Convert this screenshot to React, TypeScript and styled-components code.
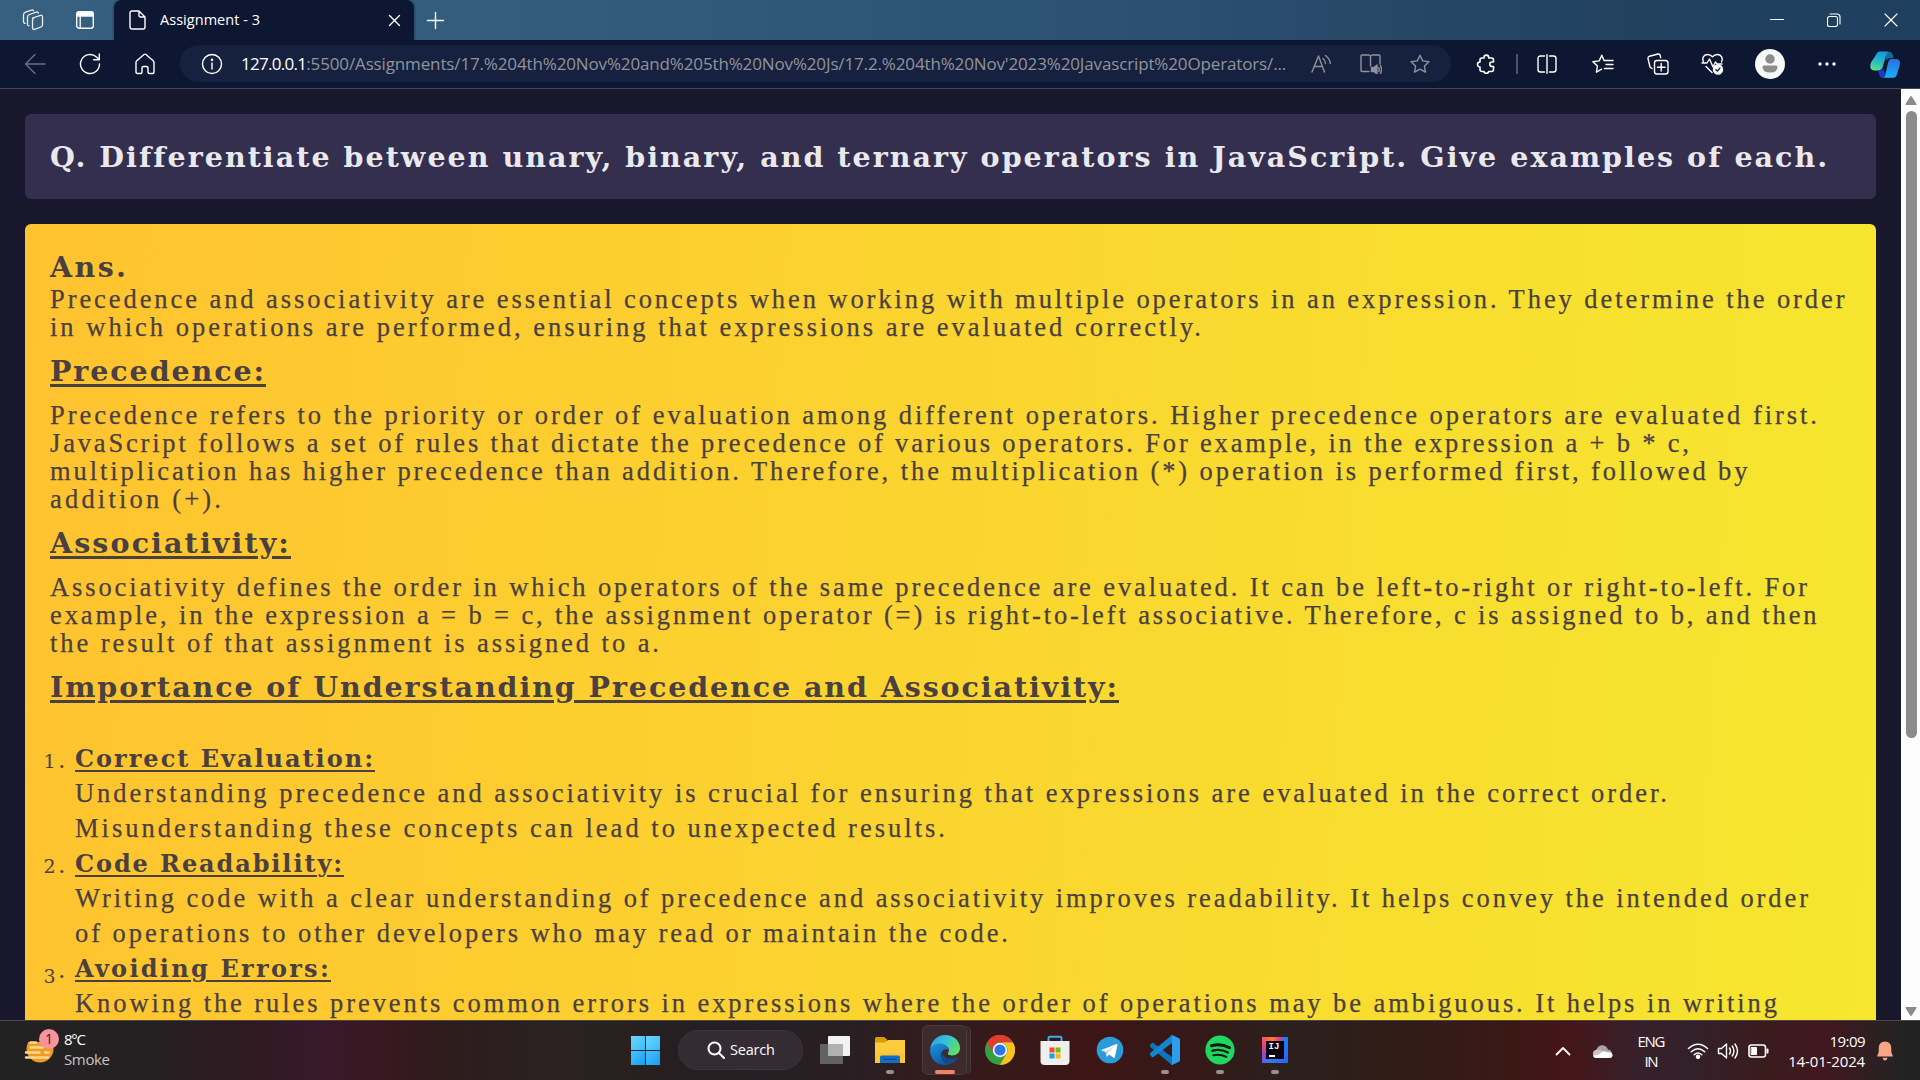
import React from 'react';
import styled, { createGlobalStyle, css } from 'styled-components';

const SERIF = '"Liberation Serif", serif';
const SERIF_BOLD = '"DejaVu Serif", serif';
const SANS = '"Open Sans", "Noto Sans", sans-serif';

const GlobalStyle = createGlobalStyle`
  * { box-sizing: border-box; }
  html, body { margin: 0; padding: 0; overflow: hidden; background: #19172b; }
  svg { display: block; }
`;

/* ---------- text tracking ---------- */

let ctx: CanvasRenderingContext2D | null = null;
function tracking(text: string, font: string, width: number, trailing: boolean) {
  if (!ctx) ctx = document.createElement('canvas').getContext('2d');
  if (!ctx) return 0;
  ctx.font = font;
  const natural = ctx.measureText(text).width;
  return (width - natural) / (trailing ? text.length : text.length - 1);
}

const BodyLine = styled.span`
  display: block;
  font: 400 26.5px ${SERIF};
  line-height: inherit;
  -webkit-text-stroke: 0.25px currentColor;
`;
const HeadLine = styled.span<{ $size: number; $line?: number }>`
  font: 700 ${(p) => p.$size}px ${SERIF_BOLD};
  line-height: inherit;
  text-decoration: ${(p) => (p.$line ? 'underline' : 'none')};
  text-decoration-thickness: ${(p) => p.$line || 0}px;
  text-underline-offset: 3px;
`;
const UiText = styled.span<{ $size: number; $color?: string }>`
  font: 400 ${(p) => p.$size}px ${SANS};
  color: ${(p) => p.$color || '#fff'};
  line-height: 20px;
  white-space: pre;
`;

const Body = ({ w, children }: { w: number; children: string }) => (
  <BodyLine style={{ letterSpacing: tracking(children, `400 26.5px ${SERIF}`, w, false) }}>{children}</BodyLine>
);
const Head = ({ w, size, line, children }: { w: number; size: number; line?: number; children: string }) => (
  <HeadLine $size={size} $line={line}
    style={{ letterSpacing: tracking(children, `700 ${size}px ${SERIF_BOLD}`, w, !!line) }}>{children}</HeadLine>
);
const Ui = ({ w, size, color, children }: { w: number; size: number; color?: string; children: string }) => (
  <UiText $size={size} $color={color}
    style={{ letterSpacing: tracking(children, `400 ${size}px ${SANS}`, w, false) }}>{children}</UiText>
);

/* ---------- browser frame ---------- */

const Screen = styled.div`
  width: 1920px;
  height: 1080px;
  display: flex;
  flex-direction: column;
  overflow: hidden;
`;
const TitleBar = styled.header`
  height: 40px;
  flex: none;
  display: flex;
  align-items: center;
  background: linear-gradient(90deg, #375f7f 0%, #335b7b 30%, #2b5070 60%, #21415f 85%, #1f3f5f 100%);
`;
const Tab = styled.div`
  width: 300px;
  height: 40px;
  margin-left: 20px;
  padding: 0 13px 0 15px;
  display: flex;
  align-items: center;
  gap: 14px;
  background: #0e1731;
  border-radius: 8px 8px 0 0;
  box-shadow: 0 0 3px rgba(8, 20, 45, 0.6);
`;
const Grow = styled.div`
  flex: 1;
`;
const Gap = styled.div<{ $w: number }>`
  flex: none;
  width: ${(p) => p.$w}px;
`;
const ToolBar = styled.nav`
  height: 49px;
  flex: none;
  display: flex;
  align-items: center;
  background: #0e1731;
  border-bottom: 1px solid #3e495e;
`;
const Address = styled.div`
  width: 1271px;
  height: 37px;
  margin: 0 0 1px 25px;
  padding-left: 21px;
  border-radius: 19px;
  background: #16213f;
  display: flex;
  align-items: center;
`;
const Separator = styled.i`
  width: 2px;
  height: 20px;
  background: #48526a;
`;
const Avatar = styled.div`
  width: 30px;
  height: 30px;
  border-radius: 50%;
  background: #f8f8f8;
  display: grid;
  place-items: center;
`;

/* ---------- page ---------- */

const Viewport = styled.div`
  flex: 1;
  min-height: 0;
  display: flex;
  background: #19172b;
`;
const Page = styled.main`
  flex: 1;
  min-width: 0;
  height: 931px;
  overflow: hidden;
  padding: 25px 25px 0;
  white-space: nowrap;
`;
const Question = styled.h1`
  margin: 0 0 25px;
  height: 85px;
  padding: 26px 25px 0;
  border-radius: 6px;
  background: #342f4e;
  color: #e9e8ec;
  line-height: 34px;
  font-size: 28px;
`;
const Answer = styled.section`
  height: 900px;
  padding: 26px 25px 0;
  border-radius: 6px 6px 0 0;
  background: linear-gradient(94deg, #ffc32f 0%, #f6e72f 100%);
  color: #4a4041;
`;
const AnswerLabel = styled.div`
  height: 34px;
  line-height: 34px;
`;
const Para = styled.p`
  margin: 0;
  padding-top: 1px;
  line-height: 28px;
`;
const Heading = styled.h2`
  margin: 13px 0 12px;
  height: 34px;
  line-height: 34px;
  font-size: 28px;
`;
const List = styled.ol`
  list-style: none;
  margin: 37px 0 0;
  padding: 0;
  line-height: 35px;
`;
const Item = styled.li`
  display: grid;
  grid-template-columns: 25px 1fr;
`;
const ItemTitle = styled.div`
  height: 35px;
`;
const Marker = styled.div`
  height: 36px;
  padding-top: 1px;
  margin-left: -20px;
  padding-right: 10px;
  text-align: right;
  font: 400 26px ${SERIF};
  line-height: 35px;
`;
const Digit = styled.span<{ $low?: boolean }>`
  font: 400 19px "DejaVu Serif", serif;
  line-height: 1;
  margin-right: 3px;
  ${(p) => p.$low && css`vertical-align: -5px;`}
`;
const Scroll = styled.aside`
  width: 19px;
  padding: 7px 0 4px 1px;
  background: #fcfcfc;
  display: flex;
  flex-direction: column;
  align-items: center;
`;
const Thumb = styled.div`
  width: 11px;
  height: 627px;
  margin-top: 6px;
  border-radius: 6px;
  background: #8b8b8b;
`;

/* ---------- taskbar ---------- */

const TaskBar = styled.footer`
  height: 60px;
  flex: none;
  display: flex;
  border-top: 1px solid #4b4648;
  background: linear-gradient(90deg, #222223 0%, #252022 8%, #2f1a20 13%, #38192b 16.5%, #3a1722 19.5%,
    #2f1c1d 23%, #2a2120 28%, #29211f 32%, #251f22 35%, #291f23 44%, #351a1b 50%, #3d1515 57%, #351918 62%,
    #2b201d 67%, #311c17 73%, #3c1815 79%, #461517 81.5%, #37202a 85%, #33212a 88%, #3b1b1d 92%, #41181f 95%, #232223 99%);
`;
const Weather = styled.div`
  width: 631px;
  padding: 8px 0 0 24px;
  display: flex;
  gap: 4px;
`;
const Stack = styled.div<{ $align?: string }>`
  display: flex;
  flex-direction: column;
  align-items: ${(p) => p.$align || 'flex-start'};
`;
const Apps = styled.div`
  flex: 1;
  display: flex;
  align-items: flex-start;
`;
const SearchBox = styled.div`
  width: 125px;
  height: 40px;
  margin: 9px 4px 0 18px;
  padding-left: 28px;
  border-radius: 20px;
  background: #352c33;
  border: 1px solid #3d343b;
  display: flex;
  align-items: center;
  gap: 5px;
`;
const App_ = styled.div<{ $active?: boolean }>`
  width: 45px;
  height: 50px;
  margin: 4px 5px 0;
  padding-top: 9px;
  display: flex;
  flex-direction: column;
  align-items: center;
  border-radius: 6px;
  border: 1px solid transparent;
  ${(p) => p.$active && css`
    background: #3c2a2c;
    border-color: #4a3a3c;
    box-shadow: 4px 0 0 -1px #3a2729, 5px 0 0 -1px #4a3a3c;
  `}
`;
const Mark = styled.i<{ $active?: boolean }>`
  width: ${(p) => (p.$active ? 20 : 8)}px;
  height: 4px;
  margin-top: 5px;
  border-radius: 2px;
  background: ${(p) => (p.$active ? '#f2826a' : '#9a9092')};
`;
const Start = styled.div`
  width: 29px;
  height: 29px;
  margin-top: 15px;
  display: grid;
  grid-template-columns: 14px 14px;
  grid-template-rows: 14px 14px;
  gap: 1px;
  i { background: linear-gradient(135deg, #6fd6fb, #35bdf8); }
  i:nth-child(n + 3) { background: linear-gradient(135deg, #45c4fb, #189cf5); }
`;
const Tray = styled.div`
  flex: none;
  display: flex;
  align-items: center;
  padding-right: 27px;
`;

/* ---------- icons ---------- */

type IcoProps = { w: number; h?: number; vb?: string; c?: string; sw?: number; children: React.ReactNode };
const Ico = ({ w, h = w, vb, c = '#fff', sw = 1.4, children }: IcoProps) => (
  <svg width={w} height={h} viewBox={vb || `0 0 ${w} ${h}`} fill="none" stroke={c} strokeWidth={sw}
    strokeLinecap="round" strokeLinejoin="round">{children}</svg>
);
const STAR = 'M10 1.2l2.7 5.7 6.2.8-4.5 4.3 1.1 6.2L10 15.200l-5.500 3 1.100-6.200L1.100 7.700l6.200-.8z';

const Workspaces = () => (
  <Ico w={22} c="#e8eef4" sw={1.3}>
    <path d="M10.500 9l8-2.600a1.400 1.400 0 0 1 2 1.300v8a2.500 2.500 0 0 1-1.600 2.300l-6.400 2.400a1.500 1.500 0 0 1-2-1.400v-7.600A2.500 2.500 0 0 1 12 9" />
    <path d="M7 16.800a1.600 1.600 0 0 1-1.500-1.600V8.200A3 3 0 0 1 7.400 5.500l6.900-2.400a1.500 1.500 0 0 1 2 1" />
    <path d="M3.200 14.300a1.600 1.600 0 0 1-1.700-1.500V6a3 3 0 0 1 2-2.800l6-2.100a1.600 1.600 0 0 1 2 .7" />
  </Ico>
);
const TabActions = () => (
  <Ico w={18} c="#f4f7fa">
    <rect x=".7" y=".7" width="16.600" height="16.600" rx="2.500" />
    <path d="M1 2.500Q1 1 3 1h12q2 0 2 1.500V5H1z" fill="#fff" />
    <path d="M4.200 5v12" />
  </Ico>
);
const Doc = () => (
  <Ico w={17} h={20}>
    <path d="M3 1h7l6 6v10a2 2 0 0 1-2 2H3a2 2 0 0 1-2-2V3a2 2 0 0 1 2-2zM10 1v4.500A1.500 1.500 0 0 0 11.500 7H16" />
  </Ico>
);
const Chrome = () => (
  <svg width="30" height="30" viewBox="0 0 30 30">
    <circle cx="15" cy="15" r="15" fill="#34a043" />
    <path d="M2 7.500A15 15 0 0 1 28 7.500H15a7.500 7.500 0 0 0-6.500 11.300z" fill="#e33b2e" />
    <path d="M28 7.500A15 15 0 0 1 15 30l6.500-11.200A7.500 7.500 0 0 0 15 7.500z" fill="#fcc31e" />
    <circle cx="15" cy="15" r="7.200" fill="#fff" />
    <circle cx="15" cy="15" r="5.600" fill="#2f75ea" />
  </svg>
);
const Edge = () => (
  <svg width="30" height="30" viewBox="0 0 30 30">
    <defs>
      <linearGradient id="eg" x1="0" y1=".2" x2="1" y2=".6">
        <stop offset="0" stopColor="#2f9fe0" /><stop offset=".5" stopColor="#35c3d6" /><stop offset="1" stopColor="#62e05c" />
      </linearGradient>
      <linearGradient id="eb" x1=".2" y1="0" x2=".7" y2="1">
        <stop offset="0" stopColor="#1c8fdd" /><stop offset="1" stopColor="#0c59a4" />
      </linearGradient>
    </defs>
    <path d="M.3 13.500C1.400 5.500 7.500 0 15 0c8.500 0 15 5.800 15 13 0 4.700-3.500 7.500-7.700 7.500-3 0-5-1-4.300-2.300 1.600-2.400 1-5.500-1.500-7.200C12 8 5 8.700.3 13.500z" fill="url(#eg)" />
    <path d="M.2 14C3 8.500 11 7 15.500 10.300c1.500 1.100 2.500 2.700 2.400 4.700-2-1.500-5.500-.5-6.500 3-1.200 4.500 2 9.500 6.600 11.500C8.500 31.700-.9 24.500.2 14z" fill="url(#eb)" />
    <path d="M11.300 16.500c-2.500 6 2.500 12.500 7.700 13 3.500-.8 6.500-3 8.600-6.200.4-.7-.1-1.200-.8-.8-6 3-14 .5-15.500-6z" fill="#124a8c" />
  </svg>
);
const Folder = () => (
  <svg width="30" height="30" viewBox="0 0 30 30">
    <path d="M0 3.500Q0 2 1.500 2H9l3 2.500V8H0z" fill="#dc9a07" />
    <path d="M0 7.500h10L13 5h17v23H0z" fill="#fccb3e" />
    <path d="M0 18h30v10H0z" fill="#fbc02c" opacity=".6" />
    <path d="M5 28v-6q0-1.500 1.500-1.500h17Q25 20.500 25 22v6z" fill="#0f70c4" />
    <path d="M8.500 24.300h13" stroke="#0a4c90" strokeWidth="1.200" />
  </svg>
);
const TaskView = () => (
  <svg width="30" height="30" viewBox="0 0 30 30">
    <rect x="8" y="1" width="22" height="20" rx="1" fill="#f2f2f2" />
    <rect x="0" y="9" width="23" height="20" rx="1" fill="#636262" />
    <rect x="8" y="9" width="15" height="12" fill="#b1b1b1" />
  </svg>
);
const Store = () => (
  <svg width="30" height="30" viewBox="0 0 30 30">
    <path d="M8.500 7V3q0-1.200 1.200-1.200h10.600q1.200 0 1.200 1.200v4" fill="none" stroke="#2fb1ea" strokeWidth="2" />
    <path d="M.5 6h29v20q0 4-4 4h-21q-4 0-4-4z" fill="#efefef" />
    <path d="M9.500 12.500h5v5h-5z" fill="#f05024" /><path d="M15.500 12.500h5v5h-5z" fill="#80b901" />
    <path d="M9.500 18.500h5v5h-5z" fill="#14a2ea" /><path d="M15.500 18.500h5v5h-5z" fill="#fbb70b" />
  </svg>
);
const Telegram = () => (
  <svg width="30" height="30" viewBox="0 0 30 30">
    <circle cx="15" cy="15" r="13.300" fill="#2a9cd9" />
    <path d="M6.500 15L21.500 9q1.200-.3 1 1l-2.600 12q-.4 1.400-1.700.6l-4-3-1.900 1.900q-.6.500-.8-.3l-1-4.500-4-1.200q-.8-.4 0-.5z" fill="#fff" />
    <path d="M10.500 16.700l8.500-5.300-6.400 6.700-.6 3z" fill="#b8d7ea" />
  </svg>
);
const Code = () => (
  <svg width="30" height="30" viewBox="0 0 30 30">
    <path d="M0 10l2-2q.7-.5 1.500 0L22 22v8L.2 12z" fill="#0d74bc" />
    <path d="M0 20l2 2q.7.500 1.500 0L22 8V0L.2 18z" fill="#1485cf" />
    <path d="M22 0l7 3.200q1 .5 1 1.600v20.400q0 1.100-1 1.600L22 30q-1 .2-1.700-.6 1.700.8 1.700-1V1.600q0-1.800-1.700-1Q21-.2 22 0z" fill="#2c9fec" />
  </svg>
);
const Spotify = () => (
  <svg width="30" height="30" viewBox="0 0 30 30" fill="none" stroke="#0d1a10" strokeLinecap="round">
    <circle cx="15" cy="15" r="14.600" fill="#20d760" stroke="none" />
    <path d="M6.500 10.800q9.500-2.600 18 2" strokeWidth="3" /><path d="M7.500 15.700q8-2.200 15.300 1.800" strokeWidth="2.400" />
    <path d="M8.300 20.200q6.800-1.700 13 1.700" strokeWidth="2" />
  </svg>
);
const IjTile = styled.div`
  width: 26px;
  height: 26px;
  margin: 2px;
  padding: 4px;
  background: conic-gradient(from 40deg, #1f7bf0, #2a66f4 25%, #2a7ef2 45%, #7a4fd8 55%, #f03c7e 70%, #ff7a2e 85%, #e23b8c 95%, #1f7bf0);
`;
const IjFace = styled.div`
  height: 18px;
  background: #080410;
  color: #fff;
  font: 700 9px/10px "Liberation Mono", monospace;
  padding: 1px 0 0 3px;
  &::after { content: ''; display: block; width: 6px; height: 1.500px; margin-top: 3px; background: #fff; }
`;
const Copilot = () => (
  <svg width="30" height="27" viewBox="0 0 30 27">
    <defs>
      <linearGradient id="ca" x1=".6" y1="0" x2=".3" y2="1"><stop offset="0" stopColor="#1797e0" /><stop offset=".5" stopColor="#22b8c4" /><stop offset="1" stopColor="#5fe08a" /></linearGradient>
      <linearGradient id="cb" x1=".5" y1="0" x2=".4" y2="1"><stop offset="0" stopColor="#2f6fdc" /><stop offset="1" stopColor="#12b4fb" /></linearGradient>
    </defs>
    <path d="M15 1h5q2 .2 2.700 3L23.500 7H20q-2.500 0-3.300 3z" fill="#0f6f9c" />
    <path d="M7.500 1.500Q8.200.5 10 .5h9q-2 .5-2.800 3.500l-3.500 12q-.9 3-3.500 3.500H4Q.4 19 .3 15.500.4 13.500 1 11.500z" fill="url(#ca)" />
    <path d="M8 19.500h2q2 0 3-2.500l2 6q-.5 3-2.500 3.700Q10 26.500 9 23z" fill="#1b3bd0" />
    <path d="M20.500 8H27q3 .5 3 4-.2 2-.8 4l-2.500 8q-.8 2.500-3.200 2.800h-11q2-.3 2.900-3.300L18 12q.9-3.500 2.500-4z" fill="url(#cb)" />
  </svg>
);

const apps: { icon: React.ReactNode; mark?: boolean; active?: boolean }[] = [
  { icon: <TaskView /> },
  { icon: <Folder />, mark: true },
  { icon: <Edge />, mark: true, active: true },
  { icon: <Chrome /> },
  { icon: <Store /> },
  { icon: <Telegram /> },
  { icon: <Code />, mark: true },
  { icon: <Spotify />, mark: true },
  { icon: <IjTile><IjFace>IJ</IjFace></IjTile>, mark: true },
];

const GREY = '#8f929b';

export default function App() {
  return (
    <Screen>
      <GlobalStyle />
      <TitleBar>
        <Gap $w={22} /><Workspaces /><Gap $w={32} /><TabActions />
        <Tab>
          <Doc />
          <Ui w={100} size={14.5}>Assignment - 3</Ui>
          <Grow />
          <Ico w={13}><path d="M1.500 1.500l10 10m0-10l-10 10" /></Ico>
        </Tab>
        <Gap $w={12} />
        <Ico w={19}><path d="M9.500 1.500v16M1.500 9.500h16" /></Ico>
        <Grow />
        <Ico w={14} sw={1}><path d="M.5 6.500h13" /></Ico><Gap $w={43} />
        <Ico w={14} sw={1.1}><path d="M2.500 3.500h6a2 2 0 0 1 2 2v6a2 2 0 0 1-2 2h-6a2 2 0 0 1-2-2v-6a2 2 0 0 1 2-2zM3 1h7a3 3 0 0 1 3 3v7" /></Ico><Gap $w={43} />
        <Ico w={14} sw={1.1}><path d="M1 1l12 12M13 1L1 13" /></Ico><Gap $w={22} />
      </TitleBar>

      <ToolBar>
        <Gap $w={24} />
        <Ico w={22} c="#69707f"><path d="M21 11H2m9-9.500L1.500 11l9.500 9.500" /></Ico><Gap $w={33} />
        <Ico w={22}><path d="M20.500 11a9.500 9.500 0 1 1-3-6.900L20 6.500M20.300 1v5.700h-5.700" /></Ico><Gap $w={34} />
        <Ico w={20} h={22}><path d="M1 9.500Q1 8.500 1.800 7.800L9 1.500q1-.8 2 0l7.200 6.300q.8.700.8 1.700V19q0 1.500-1.500 1.500h-3Q13 20.500 13 19v-4q0-1.500-1.500-1.500h-3Q7 13.500 7 15v4q0 1.500-1.500 1.500h-3Q1 20.500 1 19z" /></Ico>
        <Address>
          <Ico w={22}><circle cx="11" cy="11" r="9.500" /><path d="M11 10v6" /><circle cx="11" cy="6.800" r=".6" fill="#fff" /></Ico>
          <Gap $w={18} />
          <Ui w={66} size={17}>127.0.0.1</Ui>
          <Ui w={980} size={17} color="#92939a">{":5500/Assignments/17.%204th%20Nov%20and%205th%20Nov%20Js/17.2.%204th%20Nov'2023%20Javascript%20Operators/..."}</Ui>
          <Grow />
          <Ico w={21} h={20} c={GREY}><path d="M1 18L7.500 2 13.500 18M3.300 12.500h8.200M12 4.500q2.500 2 2.500 5M14.500 1.500q4.500 3.500 4.800 8" /></Ico>
          <Gap $w={28} />
          <Ico w={22} h={20} c={GREY}><path d="M9 17.500H2q-1 0-1-1V2q0-1 1-1h7l1.500 1.200L12 1h7q1 0 1 1v8M10.500 2.500V12" /><path d="M11.500 13.500h2.500l3-2.500v9l-3-2.500h-2.500z" fill={GREY} /><path d="M18.800 13.500q1 2 0 4M20.500 11.500q2 4 0 8" /></Ico>
          <Gap $w={28} />
          <Ico w={20} c={GREY}><path d={STAR} /></Ico>
          <Gap $w={21} />
        </Address>
        <Gap $w={25} />
        <Ico w={20} sw={1.6}><path d="M5.500 4H8V3.500A2.300 2.300 0 0 1 12.700 3.500V4H15.500Q17.500 4 17.500 6V8H16A2.200 2.200 0 0 0 16 12.500H17.500V15.500Q17.500 17.500 15.500 17.500H12.700A2.400 2.400 0 0 1 8 17.500H6Q4 17.500 4 15.500V13A2.400 2.400 0 0 1 4 8V6Q4 4 6 4" /></Ico>
        <Gap $w={20} /><Separator /><Gap $w={19} />
        <Ico w={20}><path d="M7.500 2H3.500Q1 2 1 4.500v11Q1 18 3.500 18h4M12.500 2h4Q19 2 19 4.500v11q0 2.500-2.500 2.500h-4M10 .8v18.400" /></Ico>
        <Gap $w={35} />
        <Ico w={22} h={20}><path d="M12 6.500L9.800 1.200 7.200 6.900.9 7.700l4.500 4.300-1 6.200 5.200-3M12 6.500h9M14 10.500h7M12.500 14.500H21" /></Ico>
        <Gap $w={33} />
        <Ico w={22}><path d="M5 15.500L3 14 1 5.500Q.8 3.800 2.500 3.200L11 1q1.500-.2 2 1l.7 2.500" /><rect x="7.500" y="7.500" width="13.500" height="13.500" rx="2.500" /><path d="M14.200 10.500v7.500M10.500 14.200H18" /></Ico>
        <Gap $w={32} />
        <Ico w={23} h={22}><path d="M2.500 9Q.5 4.500 4 2.200q4-2 7.500 1.600Q15 .2 19 2.200 22.500 4.500 20.500 9M1 10h5l2.500-4 3.500 8 2.500-5 1.500 2H21M5 13.500l6 6" /><circle cx="17" cy="16.500" r="4.500" fill="#fff" /><path d="M15 16.700l1.400 1.400 2.500-3" stroke="#0e1731" /></Ico>
        <Gap $w={31} />
        <Avatar><svg width="16" height="20" viewBox="0 0 16 20" fill="#8c8c8c"><circle cx="8" cy="5" r="4.700" /><path d="M2 11.500h12q1.500 0 1.500 1.500 0 5.500-7.500 5.500T.5 13Q.5 11.500 2 11.500z" /></svg></Avatar>
        <Gap $w={33} />
        <Ico w={18} h={4} sw={0}><g fill="#fff"><circle cx="2" cy="2" r="1.700" /><circle cx="9" cy="2" r="1.700" /><circle cx="16" cy="2" r="1.700" /></g></Ico>
        <Gap $w={34} />
        <Copilot />
      </ToolBar>

      <Viewport>
        <Page>
          <Question><Head w={1776} size={28.5}>Q. Differentiate between unary, binary, and ternary operators in JavaScript. Give examples of each.</Head></Question>
          <Answer>
            <AnswerLabel><Head w={76} size={28.5}>Ans.</Head></AnswerLabel>
            <Para>
              <Body w={1795}>Precedence and associativity are essential concepts when working with multiple operators in an expression. They determine the order</Body>
              <Body w={1151}>in which operations are performed, ensuring that expressions are evaluated correctly.</Body>
            </Para>
            <Heading><Head w={216} size={28.5} line={3}>Precedence:</Head></Heading>
            <Para>
              <Body w={1767}>Precedence refers to the priority or order of evaluation among different operators. Higher precedence operators are evaluated first.</Body>
              <Body w={1639}>JavaScript follows a set of rules that dictate the precedence of various operators. For example, in the expression a + b * c,</Body>
              <Body w={1698}>multiplication has higher precedence than addition. Therefore, the multiplication (*) operation is performed first, followed by</Body>
              <Body w={171}>addition (+).</Body>
            </Para>
            <Heading><Head w={241} size={28.5} line={3}>Associativity:</Head></Heading>
            <Para>
              <Body w={1757}>Associativity defines the order in which operators of the same precedence are evaluated. It can be left-to-right or right-to-left. For</Body>
              <Body w={1767}>example, in the expression a = b = c, the assignment operator (=) is right-to-left associative. Therefore, c is assigned to b, and then</Body>
              <Body w={609}>the result of that assignment is assigned to a.</Body>
            </Para>
            <Heading><Head w={1069} size={28.5} line={3}>Importance of Understanding Precedence and Associativity:</Head></Heading>
            <List>
              <Item>
                <Marker><Digit>1</Digit>.</Marker>
                <div>
                  <ItemTitle><Head w={300} size={24} line={2}>Correct Evaluation:</Head></ItemTitle>
                  <Body w={1592}>Understanding precedence and associativity is crucial for ensuring that expressions are evaluated in the correct order.</Body>
                  <Body w={870}>Misunderstanding these concepts can lead to unexpected results.</Body>
                </div>
              </Item>
              <Item>
                <Marker><Digit>2</Digit>.</Marker>
                <div>
                  <ItemTitle><Head w={269} size={24} line={2}>Code Readability:</Head></ItemTitle>
                  <Body w={1733}>Writing code with a clear understanding of precedence and associativity improves readability. It helps convey the intended order</Body>
                  <Body w={933}>of operations to other developers who may read or maintain the code.</Body>
                </div>
              </Item>
              <Item>
                <Marker><Digit $low>3</Digit>.</Marker>
                <div>
                  <ItemTitle><Head w={256} size={24} line={2}>Avoiding Errors:</Head></ItemTitle>
                  <Body w={1702}>Knowing the rules prevents common errors in expressions where the order of operations may be ambiguous. It helps in writing</Body>
                </div>
              </Item>
            </List>
          </Answer>
        </Page>
        <Scroll>
          <svg width="12" height="9" viewBox="0 0 12 9" fill="#8b8b8b"><path d="M6 0Q6.500 0 7 .8L11.500 8q.3 1-.7 1H1.200Q.2 9 .5 8L5 .8Q5.500 0 6 0z" /></svg>
          <Thumb />
          <Grow />
          <svg width="12" height="9" viewBox="0 0 12 9" fill="#8b8b8b"><path d="M6 9Q5.500 9 5 8.200L.5 1Q.2 0 1.200 0h9.600q1 0 .7 1L7 8.200Q6.500 9 6 9z" /></svg>
        </Scroll>
      </Viewport>

      <TaskBar>
        <Weather>
          <svg width="36" height="36" viewBox="0 0 36 36">
            <circle cx="16" cy="20" r="13.500" fill="#f29a26" />
            <path d="M0 0h30v13H0z" fill="#232122" />
            <path d="M6.500 13.500H12M6.500 18.500h12M2 23.500h13.500M21 23.500h4M2 28.500h22" stroke="#f7d98a" strokeWidth="2.500" strokeLinecap="round" />
            <circle cx="25" cy="10" r="10" fill="#f7949b" />
            <text x="25" y="15" fontSize="14" textAnchor="middle" fontFamily="Open Sans, sans-serif" fill="#3a1a1e">1</text>
          </svg>
          <Stack><Gap $w={1} /><Ui w={22} size={15}>8°C</Ui><Ui w={46} size={15} color="#c6c4c4">Smoke</Ui></Stack>
        </Weather>
        <Apps>
          <Start><i /><i /><i /><i /></Start>
          <SearchBox>
            <Ico w={18} sw={2}><circle cx="7.500" cy="7.500" r="6" /><path d="M12 12l5 5" /></Ico>
            <Ui w={45} size={14.5}>Search</Ui>
          </SearchBox>
          {apps.map((a, i) => (
            <App_ key={i} $active={a.active}>
              {a.icon}
              {a.mark && <Mark $active={a.active} />}
            </App_>
          ))}
        </Apps>
        <Tray>
          <Ico w={16} h={10} sw={1.8}><path d="M1.500 8.500L8 2l6.500 6.500" /></Ico><Gap $w={21} />
          <svg width="21" height="14" viewBox="0 0 21 14"><path d="M4.500 9A5.800 5.800 0 0 1 16 5.500q4 .5 4 4.500L8 11z" fill="#aaa1a6" /><path d="M4.500 14a4.200 4.200 0 0 1 0-8.300q3-1 6 1.300l5 1.500q4.800-.3 5 2.800-.3 2.700-3 2.700z" fill="#c9c3c6" /><path d="M1 11.500Q6 12 10 8q2-1.500 4.500 0 5.500-.2 6 3-.3 3-3 3h-13Q1.500 14 1 11.500z" fill="#fff" /></svg>
          <Gap $w={24} />
          <Stack $align="center"><Ui w={28} size={15}>ENG</Ui><Ui w={14} size={15}>IN</Ui></Stack>
          <Gap $w={23} />
          <Ico w={22} h={16} sw={1.5}><path d="M1.500 5.500Q11-3 20.500 5.500M4.300 8.700q6.700-6 13.400 0M7.200 11.700q3.800-3.300 7.600 0" /><circle cx="11" cy="13.800" r="1.500" fill="#fff" /></Ico>
          <Gap $w={8} />
          <Ico w={22} h={18} sw={1.400}><path d="M1.500 6.500h3L9.500 2v14l-5-4.500h-3zM12.500 6q2 3 0 6M15.200 4q3.500 5 0 10M18 2q5 7 0 14" /></Ico>
          <Gap $w={9} />
          <Ico w={21} h={14} sw={1.600}><rect x="1" y="1" width="16.500" height="12" rx="2.500" /><path d="M3.500 3.500h5v7h-5z" fill="#fff" strokeWidth="1" /><path d="M19.500 5.500v3" strokeWidth="2" /></Ico>
          <Gap $w={19} />
          <Stack $align="flex-end"><Ui w={36} size={15}>19:09</Ui><Ui w={77} size={15}>14-01-2024</Ui></Stack>
          <Gap $w={12} />
          <svg width="16" height="20" viewBox="0 0 16 20" fill="#f7a487"><path d="M8 .5Q14 .8 14.300 7v4l1.700 4.500H0L1.700 11V7Q2 .8 8 .5zM5.500 16.800h5q-.5 2.700-2.500 2.700t-2.500-2.700z" /></svg>
        </Tray>
      </TaskBar>
    </Screen>
  );
}
